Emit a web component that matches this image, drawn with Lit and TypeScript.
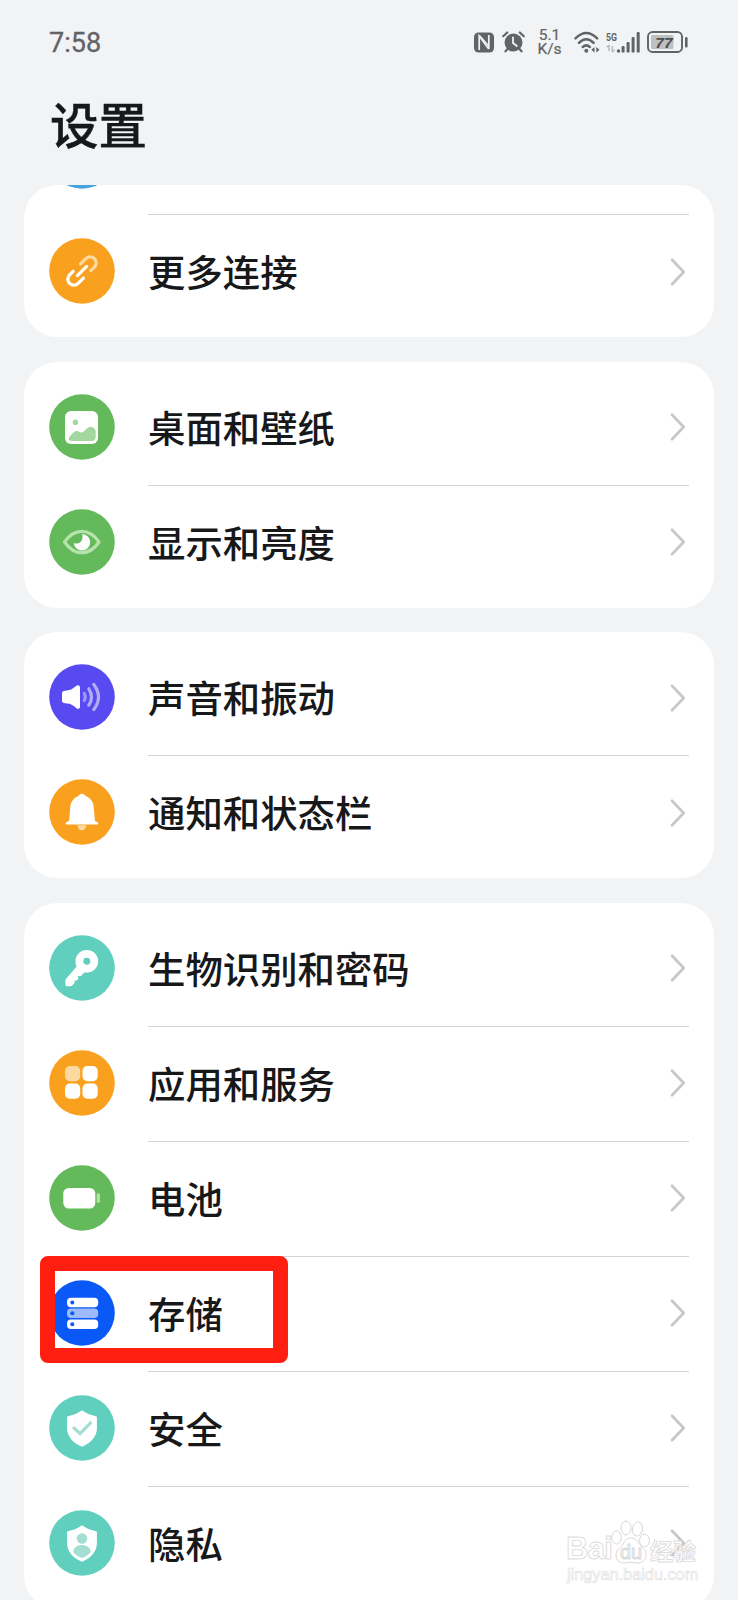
import { LitElement, html, css, svg, nothing } from "lit";
import { customElement, property } from "lit/decorators.js";

const shieldPath = "M33 15.300c5 3.400 9 5 14 5.900.6.1.9.5.9 1V33c0 8-5 14.500-14.900 18.700C23 47.500 18.100 41 18.100 33V22.200c0-.5.3-.9.9-1 5-.9 9-2.500 14-5.900z";

const glyphs: Record<string, unknown> = {
  none: svg``,
  link: svg`<g transform="rotate(-45 33 33)" fill="none" stroke-width="3.300" stroke-linecap="round">
      <path d="M37 27h7.500a6 6 0 0 1 0 12h-5" stroke="#fcd9a0"/>
      <path d="M26.500 27h-5a6 6 0 0 0 0 12h7.500M26.500 33h13" stroke="#fff"/>
    </g>`,
  picture: svg`<rect x="16" y="17" width="33" height="33" rx="6" fill="#fff"/>
    <circle cx="26.500" cy="28.300" r="2.800" fill="#a3d79f"/>
    <path d="M19.500 44.500c2.500-3.500 5.500-7.500 8-7.500 2.300 0 3.700 1.700 5.200 1.400 3.500-.8 5.500-5.600 9-5.600 2.300 0 4.100 2.200 5 3.900v6.300c0 2.300-1.300 4-4 4H23c-2 0-3.700-1-3.500-2.500z" fill="#a3d79f"/>`,
  eye: svg`<path d="M15.500 33C20 26.500 26 22.300 32.800 22.300S45.600 26.500 50 33c-4.400 6.500-10.400 10.700-17.200 10.700S20 39.500 15.500 33z" fill="none" stroke="#b6e2ac" stroke-width="3.200" stroke-linejoin="round"/>
    <path d="M33.200 25a8.300 8.300 0 1 1-8.500 9c1.300.7 3 .8 4.600.3 3.400-1.100 4.900-4.700 3.900-9.300z" fill="#fff"/>`,
  sound: svg`<path d="M15 27c1.500-.4 3.700-.5 5.500-.9 3-.8 5-3 7-4.300 1.500-1 3.500-.5 3.500 2v19c0 2-2 2.600-3.500 1.500-2-1.400-4-3.600-7-4.500-1.800-.4-3.500-.5-5.500-.9-1.200-.2-2-1-2-2.200v-7.500c0-1.200.8-1.900 2-2.200z" fill="#fff"/>
    <g fill="none" stroke-linecap="round" stroke-width="3.200">
      <path d="M35.300 29.500q2 3.500 0 7" stroke="#9d96f6"/><path d="M39.800 24.800q5.400 8.200 0 16.400" stroke="#b3adf8"/><path d="M44.800 20.500q9.400 12.500 0 25" stroke="#b3adf8"/>
    </g>`,
  bell: svg`<path d="M28.300 46.300h9.200c-.5 3-2.300 5-4.600 5s-4.100-2-4.600-5z" fill="#fcd9a0"/>
    <path d="M33 14.700c1.900 0 2.800 1.700 4.300 2.500 4.800 2.400 7.200 6.200 7.500 11.300l1 12.500c.2 1 .9 1.500 2.200 2 2 .8 1.600 2.600-.1 2.600H18c-1.700 0-2-1.800 0-2.600 1.300-.5 2-1 2.200-2l1-12.500c.3-5.100 2.700-8.900 7.500-11.300 1.500-.8 2.400-2.500 4.300-2.500z" fill="#fff"/>`,
  key: svg`<circle cx="37.800" cy="26.300" r="7.400" fill="none" stroke="#fff" stroke-width="7.900"/>
    <path d="M28.500 30.500 17.500 43.200c-.8 1-1.100 1.700-1.100 2.900v3.300c0 1.300.7 1.900 2 1.900h3c1.200 0 1.500-.4 2.300-1.200l2.200-2.500-.4-2.200 2.200.1 1.700-1.900-.7-2.700 3 .4 4.500-4.500z" fill="#fff"/>`,
  apps: svg`<rect x="16" y="16" width="15.200" height="15.200" rx="4.800" fill="#fcd9a0"/><rect x="33.500" y="16" width="15.200" height="15.200" rx="4.800" fill="#fff"/><rect x="16" y="33.500" width="15.200" height="15.200" rx="4.800" fill="#fff"/><rect x="33.500" y="33.500" width="15.200" height="15.200" rx="4.800" fill="#fff"/>`,
  battery: svg`<rect x="14.300" y="23" width="32" height="20.500" rx="5.500" fill="#fff"/><rect x="47.700" y="28.300" width="3.200" height="9.400" rx="1.500" fill="#b6e2ac"/>`,
  storage: svg`<rect x="18" y="17.800" width="31.200" height="9.400" rx="4" fill="#fff"/><rect x="18" y="28.600" width="31.200" height="9.400" rx="4" fill="#9dbbfa"/><rect x="18" y="39.500" width="31.200" height="9.400" rx="4" fill="#fff"/>
    <g fill="#0a59f7"><circle cx="23.300" cy="22.500" r="2"/><circle cx="23.300" cy="33.300" r="2"/><circle cx="23.300" cy="44.200" r="2"/></g>`,
  shield: svg`<path d=${shieldPath} fill="#fff"/><path d="M25 33 31 38.600 41.500 27.800" fill="none" stroke="#a2dfd1" stroke-width="3.200" stroke-linecap="round" stroke-linejoin="round"/>`,
  privacy: svg`<path d=${shieldPath} fill="#fff"/><circle cx="33" cy="28.500" r="5.200" fill="#a2dfd1"/><path d="M24.300 42.200c0-4.500 4-7.200 8.700-7.200s8.700 2.700 8.700 7.200c-2 2.400-5 4.500-8.700 5.800-3.700-1.300-6.700-3.400-8.700-5.800z" fill="#a2dfd1"/>`,
};

interface Item { icon: string; color: string; label: string; marked?: boolean }

const groups: Item[][] = [
  [
    { icon: "none", color: "#46a4dc", label: "" },
    { icon: "link", color: "#f9a01e", label: "更多连接" },
  ],
  [
    { icon: "picture", color: "#64ba5b", label: "桌面和壁纸" },
    { icon: "eye", color: "#64ba5b", label: "显示和亮度" },
  ],
  [
    { icon: "sound", color: "#564af0", label: "声音和振动" },
    { icon: "bell", color: "#f9a01e", label: "通知和状态栏" },
  ],
  [
    { icon: "key", color: "#61cfbe", label: "生物识别和密码" },
    { icon: "apps", color: "#f9a01e", label: "应用和服务" },
    { icon: "battery", color: "#64ba5b", label: "电池" },
    { icon: "storage", color: "#0a59f7", label: "存储", marked: true },
    { icon: "shield", color: "#61cfbe", label: "安全" },
    { icon: "privacy", color: "#61cfbe", label: "隐私" },
  ],
];

@customElement("status-bar")
export class StatusBar extends LitElement {
  static styles = css`
    :host { display: flex; flex: none; align-items: center; height: 84px; padding: 0 50px 0 49px; box-sizing: border-box; color: #626366; font-family: Roboto, sans-serif; }
    .time { flex: 1; font-size: 27px; line-height: 32px; padding-top: 2px; -webkit-text-stroke: .3px; }
    svg { display: block; flex: none; }
    .alarm { margin-left: 8px; }
    .speed { display: flex; flex-direction: column; align-items: center; width: 27px; margin: 0 11px; font-size: 15.500px; line-height: 14.500px; white-space: nowrap; -webkit-text-stroke: .2px; }
    .signal { margin-left: 6px; }
    .battery { margin-left: 7px; }
    .gen { font: 700 11px "Roboto", sans-serif; }
    .level { font: italic 700 15.500px "Liberation Sans", sans-serif; }
  `;
  render() {
    return html`
      <span class="time">7:58</span>
      <svg width="20" height="21" viewBox="0 0 20 21" fill="none">
        <rect x="0" y=".5" width="20" height="20" rx="4.500" fill="#626366"/>
        <path d="M5.200 18V4L14.800 17M14.800 3v14" stroke="#f1f3f5" stroke-width="1.700"/>
        <path d="M5.500 3.500 14.800 14" stroke="#f1f3f5" stroke-width="1.200"/>
      </svg>
      <svg class="alarm" width="23" height="22" viewBox="0 0 23 22" fill="none" stroke="#626366" stroke-linecap="round">
        <circle cx="11.500" cy="11.500" r="9" fill="#626366" stroke="none"/>
        <path d="M1.200 5.200 5.200 1.500M21.800 5.200 17.800 1.500M5.500 18 3.500 20.300M17.500 18l2 2.300" stroke-width="2.200"/>
        <path d="M11 6.500v5.500l3.800 3" stroke="#f1f3f5" stroke-width="1.800"/>
      </svg>
      <div class="speed"><span>5.1</span><span>K/s</span></div>
      <svg width="26" height="23" viewBox="0 0 26 23" fill="none" stroke="#626366" stroke-width="2.500" stroke-linecap="round">
        <path d="M1.500 7.300q10.800-10.600 21.600 0M5 11.800q7.300-7 14.600 0M8.800 16q3.500-3.200 7 0"/>
        <circle cx="12.300" cy="19.800" r="2" fill="#626366" stroke="none"/>
        <path d="M20.500 16v5.500l-3.200-2.700zM22.300 21.500V16l3.200 2.700z" fill="#626366" stroke="none"/>
      </svg>
      <svg class="signal" width="34" height="23" viewBox="0 0 34 23" fill="#626366">
        <text class="gen" x="0" y="9.500" textLength="11" lengthAdjust="spacingAndGlyphs">5G</text>
        <path d="M3 14v6M.8 16.200 3 14M6.300 15v6M8.500 18.800 6.300 21" stroke="#b9babc" stroke-width="1.500" fill="none"/>
        <circle cx="12.500" cy="20" r="1.700"/><rect x="15.600" y="15" width="3" height="6.600" rx="1.200"/><rect x="20.600" y="11" width="3" height="10.600" rx="1.200"/><rect x="25.600" y="6" width="3" height="15.600" rx="1.200"/><rect x="30.700" y="1" width="3" height="20.600" rx="1.200"/>
      </svg>
      <svg class="battery" width="41" height="22" viewBox="0 0 41 22">
        <rect x="1" y="1" width="34" height="20" rx="4.500" fill="none" stroke="#626366" stroke-width="1.900"/>
        <rect x="4" y="4" width="22.500" height="14" rx="1.500" fill="#bfc0c2"/>
        <rect x="38" y="6" width="2.600" height="10.500" rx="1.200" fill="#626366"/>
        <text class="level" x="8.300" y="16.500" fill="#4b4c4e">77</text>
      </svg>`;
  }
}

@customElement("setting-row")
export class SettingRow extends LitElement {
  @property({ attribute: false }) item!: Item;
  static styles = css`
    :host { display: flex; height: 115px; padding: 0 25px; box-sizing: border-box; position: relative; }
    .icon { flex: none; align-self: center; width: 66px; height: 66px; margin-bottom: 1px; }
    .body { flex: 1; display: flex; align-items: center; justify-content: space-between; margin-left: 32.500px; border-top: 1px solid var(--line, transparent); }
    .label { font-size: 37.400px; line-height: 56px; font-weight: 500; color: #17181a; padding: 0 0 2px .5px; white-space: nowrap; }
    .chevron { width: 18px; height: 30px; margin: 0 1.500px 1px 0; }
    .marker { position: absolute; left: 15.500px; top: .5px; box-sizing: border-box; width: 248.500px; height: 106.500px; border: 15.500px solid #ff1f10; border-radius: 8px; }
  `;
  render() {
    const { icon, color, label, marked } = this.item;
    return html`
      <svg class="icon" viewBox="0 0 66 66"><circle cx="33" cy="33" r="32.800" fill=${color}/>${glyphs[icon]}</svg>
      <div class="body">
        <span class="label">${label}</span>
        <svg class="chevron" viewBox="0 0 18 30" fill="none" stroke="#c6c7c9" stroke-width="2.700" stroke-linecap="round" stroke-linejoin="round"><path d="M2 2.800 13.700 15 2 27.200"/></svg>
      </div>
      ${marked ? html`<div class="marker"></div>` : nothing}`;
  }
}

@customElement("baidu-watermark")
export class BaiduWatermark extends LitElement {
  static styles = css`
    :host { display: block; width: 134px; color: rgba(255, 255, 255, .75); font-family: "Liberation Sans", sans-serif; }
    .brand { display: flex; align-items: flex-end; height: 46px; }
    .bai { font-size: 31px; line-height: 30px; font-weight: 700; width: 45px; letter-spacing: -.7px; -webkit-text-stroke: .9px #dcdcdc; }
    .paw { flex: none; width: 39px; height: 44px; }
    .du { font: 400 20px "Liberation Sans", sans-serif; }
    .cn { font: 700 23px/28px "Noto Sans CJK SC", sans-serif; -webkit-text-stroke: .9px #dcdcdc; }
    .url { font-size: 16.300px; line-height: 20px; -webkit-text-stroke: .6px #e0e0e0; padding-left: 1px; }
  `;
  render() {
    return html`
      <div class="brand">
        <span class="bai">Bai</span>
        <svg class="paw" viewBox="0 0 39 44" fill="rgba(255,255,255,.7)" stroke="#d8d8d8" stroke-width="1">
          <ellipse cx="5.500" cy="17.500" rx="4.800" ry="6.600"/><ellipse cx="15" cy="8" rx="5" ry="7"/><ellipse cx="26.500" cy="9" rx="5" ry="7" transform="rotate(10 26.500 9)"/><ellipse cx="33.500" cy="20.500" rx="5" ry="6.300"/>
          <path d="M20 18c6 0 7 5 11 9 4 3.500 4.500 6 4 9-.8 5-4 7-8 7-3 0-5-.8-7-.8s-4 .8-7 .8c-5 0-8-3-8-8 0-4 3-6.500 6-9.500S14 18 20 18z"/>
          <text class="du" x="9" y="38.500">du</text>
        </svg>
        <span class="cn">经验</span>
      </div>
      <div class="url">jingyan.baidu.com</div>`;
  }
}

@customElement("app-root")
export class AppRoot extends LitElement {
  static styles = css`
    :host { display: flex; flex-direction: column; position: relative; width: 738px; height: 1600px; overflow: hidden; background: #f1f3f5; font-family: "Noto Sans CJK SC", sans-serif; }
    .title { flex: none; margin: 0; padding: 0 0 0 50px; height: 101px; font-size: 48.500px; line-height: 78px; font-weight: 500; color: #17181a; box-sizing: border-box; -webkit-text-stroke: .4px; }
    .list { flex: none; display: flex; flex-direction: column; gap: 24.500px; padding: 0 24px; }
    .card { flex: none; display: flex; flex-direction: column; padding: 8px 0; background: #fff; border-radius: 33px; overflow: hidden; }
    .clipped { box-sizing: border-box; height: 152px; justify-content: flex-end; }
    .card setting-row { flex: none; }
    .card setting-row + setting-row { --line: #d3d4d5; }
    .watermark { position: absolute; left: 566px; top: 1518px; }
  `;
  render() {
    return html`
      <status-bar></status-bar>
      <h1 class="title">设置</h1>
      <main class="list">
        ${groups.map((g, i) => html`<section class="card ${i === 0 ? "clipped" : ""}">${g.map((it) => html`<setting-row .item=${it}></setting-row>`)}</section>`)}
      </main>
      <baidu-watermark class="watermark"></baidu-watermark>`;
  }
}
